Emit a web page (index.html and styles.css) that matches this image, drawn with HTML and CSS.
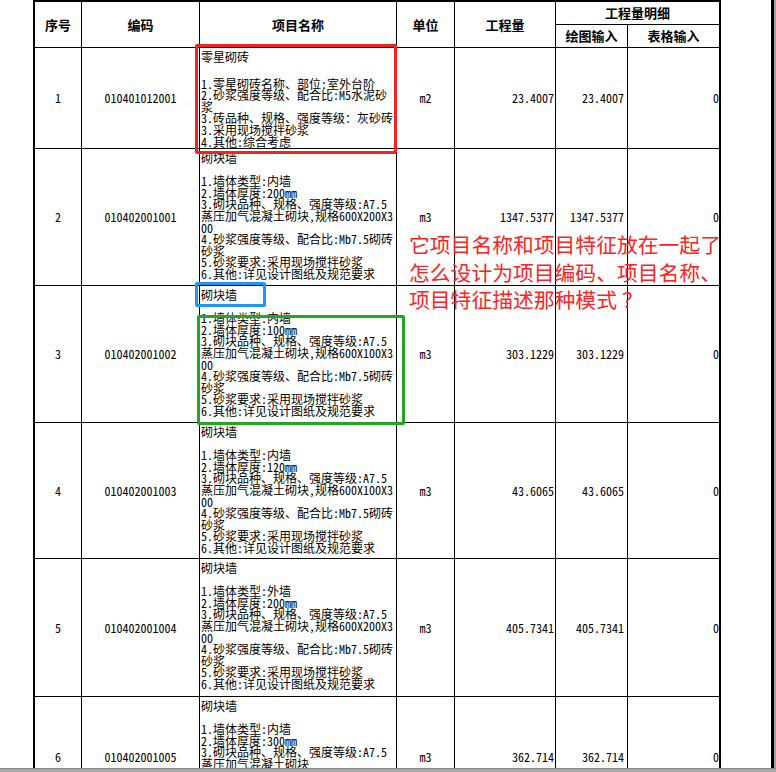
FILE: index.html
```html
<!DOCTYPE html>
<html lang="zh-CN">
<head>
<meta charset="utf-8">
<title>工程量清单</title>
<link rel="stylesheet" href="styles.css">
</head>
<body>
<div class="screen">
  <div class="viewport">
    <div class="sheet">
      <table class="boq">
        <colgroup>
          <col class="c-no"><col class="c-code"><col class="c-name"><col class="c-unit"><col class="c-qty"><col class="c-draw"><col class="c-form">
        </colgroup>
        <thead>
          <tr class="h1">
            <th rowspan="2">序号</th>
            <th rowspan="2">编码</th>
            <th rowspan="2">项目名称</th>
            <th rowspan="2">单位</th>
            <th rowspan="2">工程量</th>
            <th colspan="2">工程量明细</th>
          </tr>
          <tr class="h2">
            <th>绘图输入</th>
            <th>表格输入</th>
          </tr>
        </thead>
        <tbody>
          <tr class="r1">
            <td class="num">1</td>
            <td class="num">010401012001</td>
            <td class="desc"><div class="title title-wide">零星砌砖</div><div>1.零星砌砖名称、部位:室外台阶</div><div>2.砂浆强度等级、配合比:M5水泥砂浆</div><div>3.砖品种、规格、强度等级：灰砂砖</div><div>3.采用现场搅拌砂浆</div><div>4.其他:综合考虑</div></td>
            <td class="num">m2</td>
            <td class="qty">23.4007</td>
            <td class="qty draw">23.4007</td>
            <td class="qty">0</td>
          </tr>
          <tr class="r2">
            <td class="num">2</td>
            <td class="num">010402001001</td>
            <td class="desc"><div class="title">砌块墙</div><div>1.墙体类型:内墙</div><div>2.墙体厚度:200mm</div><div>3.砌块品种、规格、强度等级:A7.5蒸压加气混凝土砌块,规格600X200X300</div><div>4.砂浆强度等级、配合比:Mb7.5砌砖砂浆</div><div>5.砂浆要求:采用现场搅拌砂浆</div><div>6.其他:详见设计图纸及规范要求</div></td>
            <td class="num">m3</td>
            <td class="qty">1347.5377</td>
            <td class="qty draw">1347.5377</td>
            <td class="qty">0</td>
          </tr>
          <tr class="r3">
            <td class="num">3</td>
            <td class="num">010402001002</td>
            <td class="desc"><div class="title">砌块墙</div><div>1.墙体类型:内墙</div><div>2.墙体厚度:100mm</div><div>3.砌块品种、规格、强度等级:A7.5蒸压加气混凝土砌块,规格600X100X300</div><div>4.砂浆强度等级、配合比:Mb7.5砌砖砂浆</div><div>5.砂浆要求:采用现场搅拌砂浆</div><div>6.其他:详见设计图纸及规范要求</div></td>
            <td class="num">m3</td>
            <td class="qty">303.1229</td>
            <td class="qty draw">303.1229</td>
            <td class="qty">0</td>
          </tr>
          <tr class="r4">
            <td class="num">4</td>
            <td class="num">010402001003</td>
            <td class="desc"><div class="title">砌块墙</div><div>1.墙体类型:内墙</div><div>2.墙体厚度:120mm</div><div>3.砌块品种、规格、强度等级:A7.5蒸压加气混凝土砌块,规格600X100X300</div><div>4.砂浆强度等级、配合比:Mb7.5砌砖砂浆</div><div>5.砂浆要求:采用现场搅拌砂浆</div><div>6.其他:详见设计图纸及规范要求</div></td>
            <td class="num">m3</td>
            <td class="qty">43.6065</td>
            <td class="qty draw">43.6065</td>
            <td class="qty">0</td>
          </tr>
          <tr class="r5">
            <td class="num">5</td>
            <td class="num">010402001004</td>
            <td class="desc"><div class="title">砌块墙</div><div>1.墙体类型:外墙</div><div>2.墙体厚度:200mm</div><div>3.砌块品种、规格、强度等级:A7.5蒸压加气混凝土砌块,规格600X200X300</div><div>4.砂浆强度等级、配合比:Mb7.5砌砖砂浆</div><div>5.砂浆要求:采用现场搅拌砂浆</div><div>6.其他:详见设计图纸及规范要求</div></td>
            <td class="num">m3</td>
            <td class="qty">405.7341</td>
            <td class="qty draw">405.7341</td>
            <td class="qty">0</td>
          </tr>
          <tr class="r6">
            <td class="num">6</td>
            <td class="num">010402001005</td>
            <td class="desc"><div class="title">砌块墙</div><div>1.墙体类型:内墙</div><div>2.墙体厚度:300mm</div><div>3.砌块品种、规格、强度等级:A7.5蒸压加气混凝土砌块</div><div>4.砂浆强度等级、配合比:Mb7.5砌砖砂浆</div><div>5.砂浆要求:采用现场搅拌砂浆</div></td>
            <td class="num">m3</td>
            <td class="qty">362.714</td>
            <td class="qty draw">362.714</td>
            <td class="qty">0</td>
          </tr>
        </tbody>
      </table>

      <div class="mark mark-red"></div>
      <div class="mark mark-blue"></div>
      <div class="mark mark-green"></div>
      <p class="note">它项目名称和项目特征放在一起了<br>怎么设计为项目编码、项目名称、<br>项目特征描述那种模式<span class="qmark">？</span></p>
    </div>
    <div class="vbar"></div>
    <div class="edge"></div>
  </div>
  <div class="hbar"></div>
</div>
</body>
</html>
```

FILE: styles.css
```css
html, body {
  margin: 0;
  padding: 0;
  background: #ffffff;
}

.screen {
  width: 776px;
  height: 772px;
  overflow: hidden;
  display: flex;
  flex-direction: column;
}

.viewport {
  height: 768px;
  display: flex;
  flex-direction: row;
  overflow: hidden;
}

.sheet {
  position: relative;
  width: 771px;
  height: 768px;
  overflow: hidden;
  padding-left: 33px;
  box-sizing: border-box;
  background: #ffffff;
}

.vbar {
  width: 3px;
  background: #000000;
}

.edge {
  width: 2px;
  background: #a0a0a0;
}

.hbar {
  height: 4px;
  border-top: 1px solid #8a8a8a;
  box-sizing: border-box;
  background: #a9a9a9;
}

/* ---------- table ---------- */
.boq {
  table-layout: fixed;
  width: 688px;
  border-collapse: separate;
  border-spacing: 0;
  border-left: 2px solid #000;
  border-top: 2px solid #000;
  font-family: "Noto Sans Mono CJK SC", "Noto Sans CJK SC", "Liberation Mono", monospace;
  font-size: 12px;
  color: #000;
}

.c-no { width: 47px; }
.c-code { width: 118px; }
.c-name { width: 197px; }
.c-unit { width: 58px; }
.c-qty { width: 101px; }
.c-draw { width: 72px; }
.c-form { width: 93px; }

.boq th,
.boq td {
  border-right: 1px solid #000;
  border-bottom: 1px solid #000;
  padding: 0 1px;
  box-sizing: border-box;
}

.boq th:last-child,
.boq td:last-child {
  border-right-width: 2px;
}

.boq th {
  font-family: "Noto Sans CJK SC", sans-serif;
  font-weight: 700;
  font-size: 13px;
  line-height: 14px;
  text-align: center;
  vertical-align: middle;
}

.h1 { height: 23px; }
.h2 { height: 23px; }
.r1 { height: 101px; }
.r2 { height: 137px; }
.r3 { height: 137px; }
.r4 { height: 136px; }
.r5 { height: 138px; }
.r6 { height: 120px; }

.boq td {
  vertical-align: middle;
  line-height: 11.6px;
}

.num {
  text-align: center;
}

.qty {
  text-align: right;
}

.boq td.qty:last-child {
  padding-right: 0;
}

.qty.draw {
  padding-right: 3px;
}

.desc {
  vertical-align: top !important;
  text-align: left;
  padding-top: 3px !important;
  word-break: break-all;
  line-break: anywhere;
}

.title {
  margin-bottom: 11.6px;
}

.title-wide {
  margin-bottom: 15px;
}

/* ---------- annotations ---------- */
.mark {
  position: absolute;
  box-sizing: border-box;
  border: 3px solid;
  border-radius: 2px;
}

.mark-red {
  left: 195px;
  top: 44px;
  width: 202px;
  height: 110px;
  border-color: #f52222;
}

.mark-blue {
  left: 195px;
  top: 282px;
  width: 71px;
  height: 25px;
  border-color: #2196f3;
}

.mark-green {
  left: 197px;
  top: 315px;
  width: 208px;
  height: 110px;
  border-color: #22a722;
}

.note {
  position: absolute;
  left: 409px;
  top: 231px;
  margin: 0;
  font-family: "Noto Sans CJK SC", sans-serif;
  font-size: 20.8px;
  line-height: 27.5px;
  color: #ff2222;
  white-space: nowrap;
}

.qmark {
  display: inline-block;
  padding-left: 5px;
}
```
